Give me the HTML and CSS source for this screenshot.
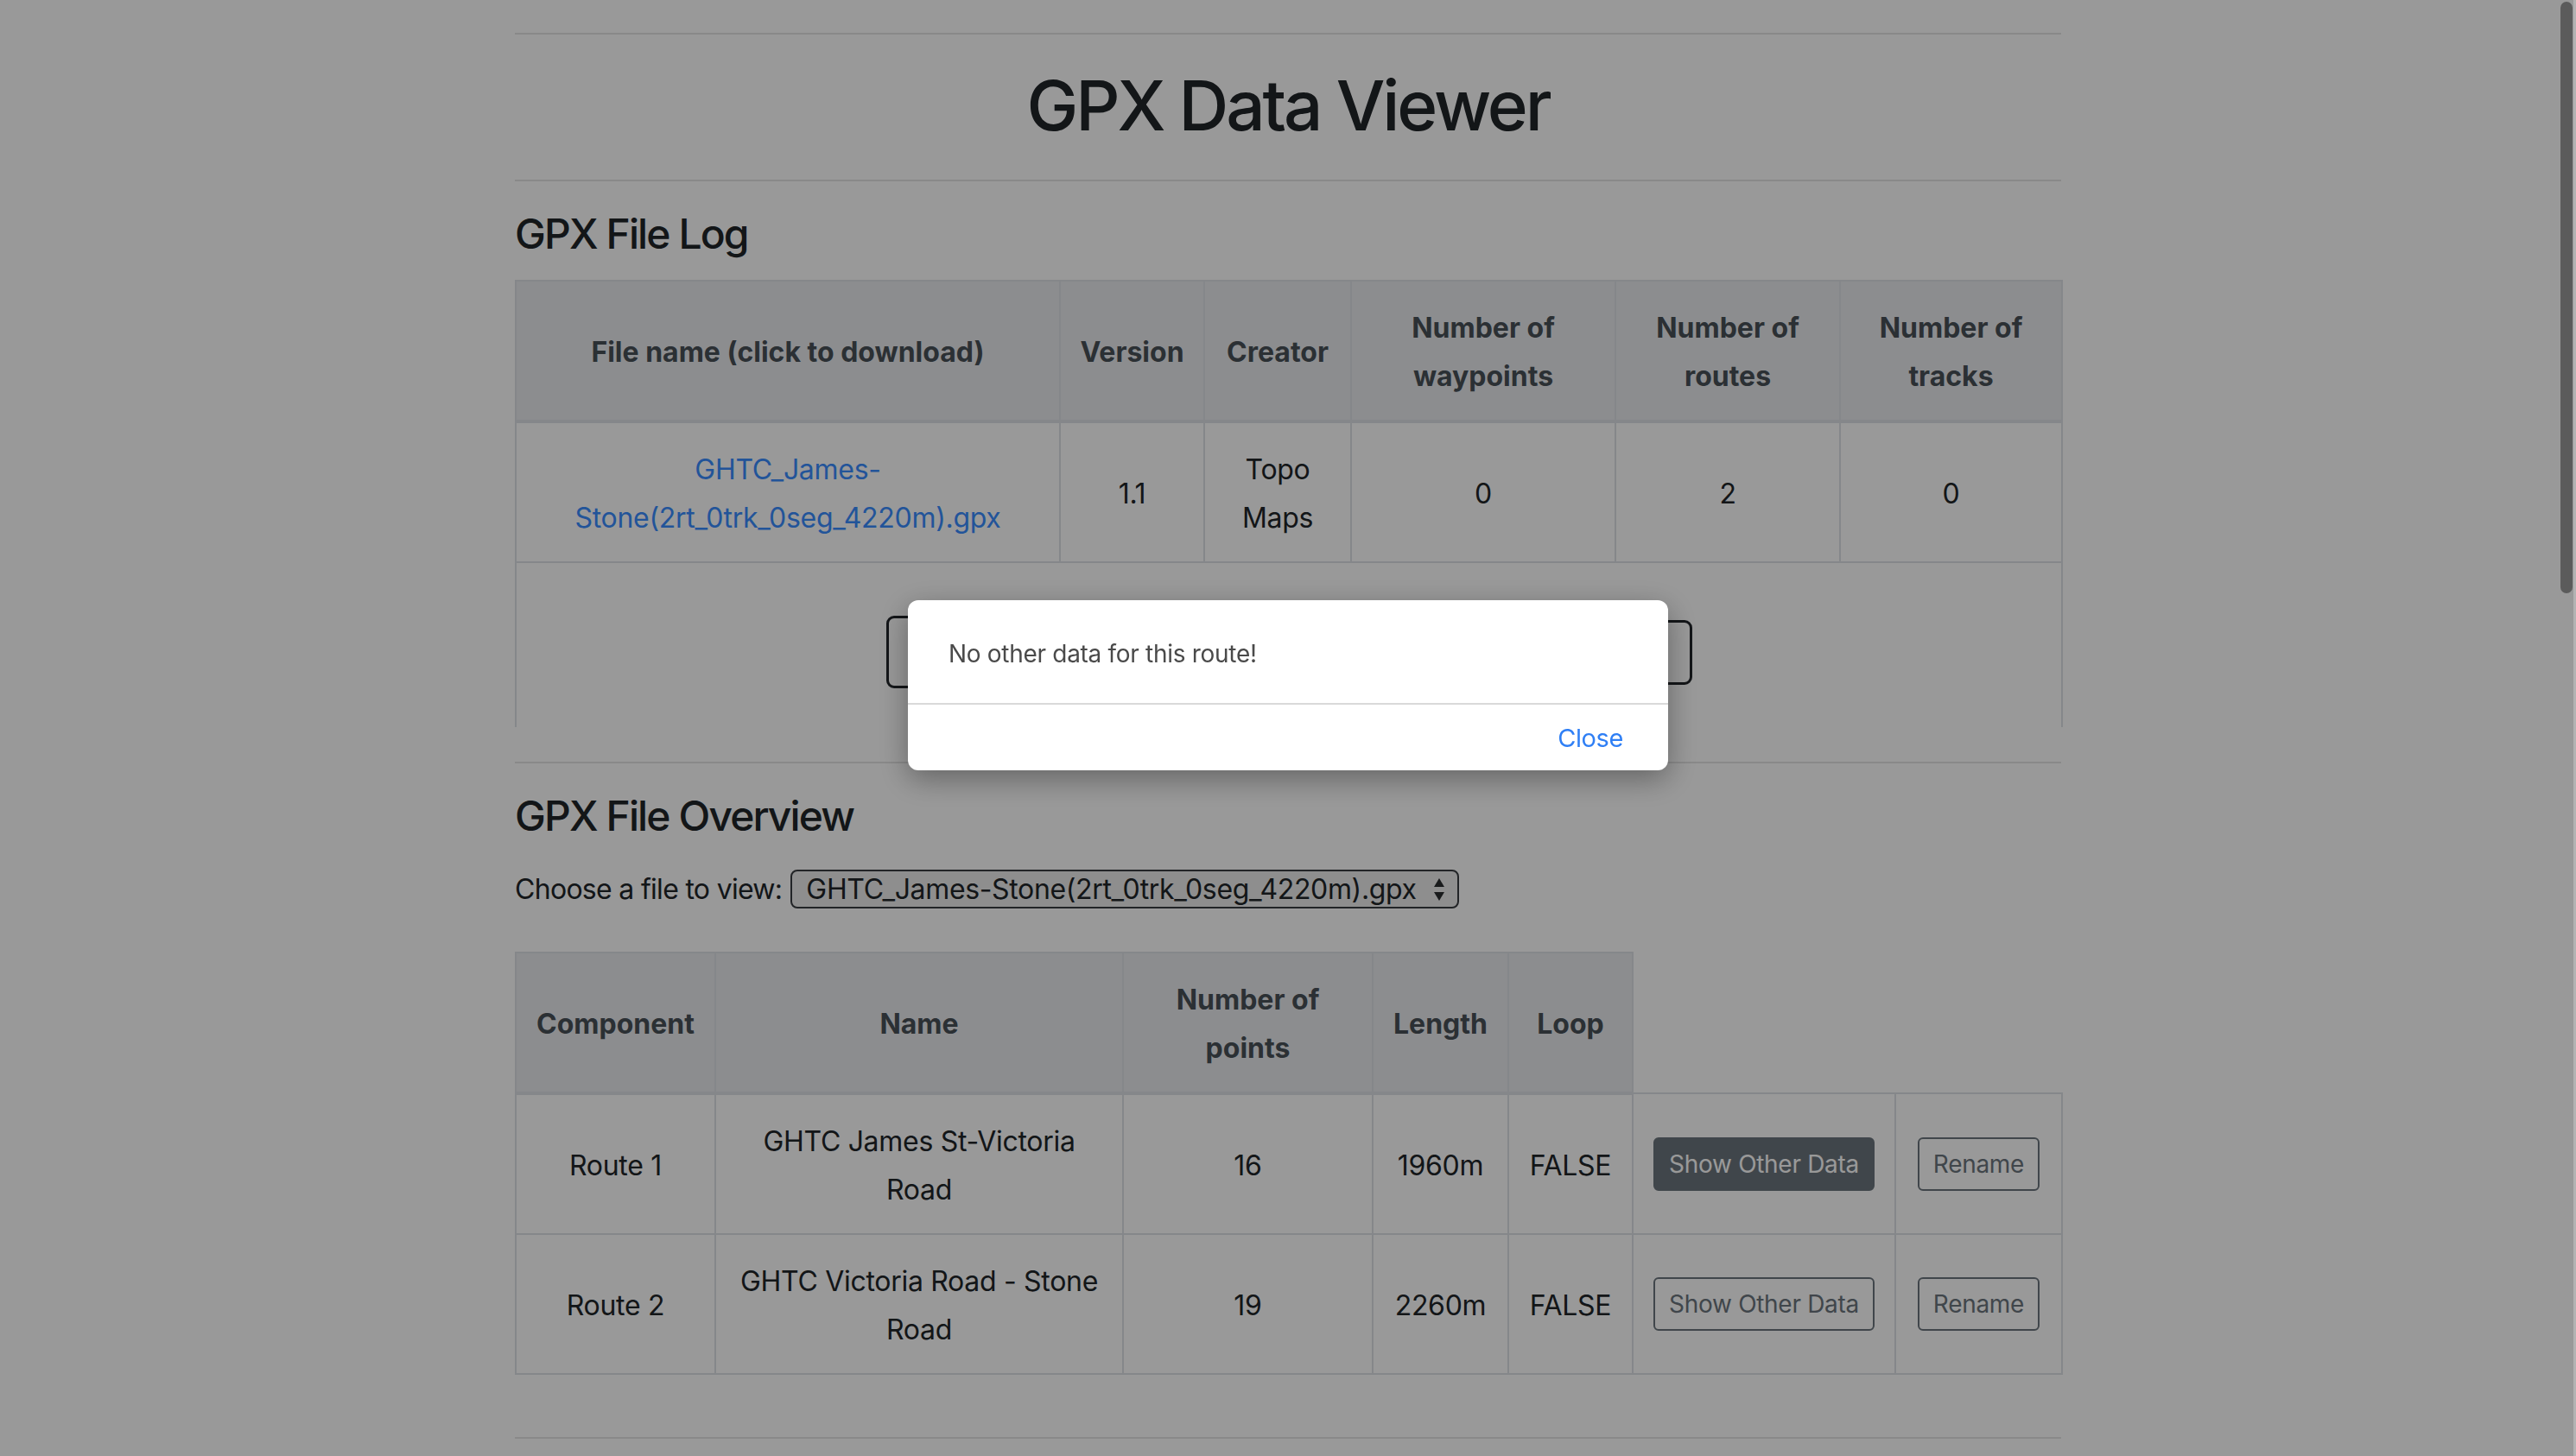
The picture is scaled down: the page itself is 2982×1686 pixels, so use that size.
FILE: index.html
```html
<!DOCTYPE html>
<html lang="en">
<head>
<meta charset="utf-8">
<title>GPX Data Viewer</title>
<link rel="stylesheet" href="styles.css">
</head>
<body>
<div class="page">
  <hr class="rule rule-top">
  <h1 class="title">GPX Data Viewer</h1>
  <hr class="rule rule-title">

  <section class="section">
    <h4 class="section-title">GPX File Log</h4>
    <table class="grid log-table">
      <colgroup>
        <col class="l1"><col class="l2"><col class="l3"><col class="l4"><col class="l5"><col class="l6">
      </colgroup>
      <thead>
        <tr>
          <th>File name (click to download)</th>
          <th>Version</th>
          <th>Creator</th>
          <th>Number of waypoints</th>
          <th>Number of routes</th>
          <th>Number of tracks</th>
        </tr>
      </thead>
      <tbody>
        <tr>
          <td><a class="file-link" href="#">GHTC_James-<br>Stone(2rt_0trk_0seg_4220m).gpx</a></td>
          <td>1.1</td>
          <td>Topo<br>Maps</td>
          <td>0</td>
          <td>2</td>
          <td>0</td>
        </tr>
        <tr>
          <td class="upload-cell" colspan="6">
            <div class="upload-row">
              <div class="upload-input"><span class="caret-bar"></span></div>
              <div class="upload-btn"></div>
            </div>
          </td>
        </tr>
      </tbody>
    </table>
  </section>

  <hr class="rule rule-section">

  <section class="section">
    <h4 class="section-title">GPX File Overview</h4>
    <div class="chooser">
      <span class="chooser-label">Choose a file to view:</span>
      <div class="fake-select">
        <span class="fake-select-text">GHTC_James-Stone(2rt_0trk_0seg_4220m).gpx</span>
        <svg class="fake-select-arrows" width="16" height="32" viewBox="0 0 16 32">
          <path d="M8 3 L14 13 L2 13 Z" fill="#2b2d30"/>
          <path d="M8 29 L14 19 L2 19 Z" fill="#2b2d30"/>
        </svg>
      </div>
    </div>

    <table class="grid view-table">
      <colgroup>
        <col class="v1"><col class="v2"><col class="v3"><col class="v4"><col class="v5"><col class="v6"><col class="v7">
      </colgroup>
      <thead>
        <tr>
          <th>Component</th>
          <th>Name</th>
          <th>Number of points</th>
          <th>Length</th>
          <th>Loop</th>
        </tr>
      </thead>
      <tbody>
        <tr>
          <td>Route 1</td>
          <td>GHTC James St-Victoria<br>Road</td>
          <td>16</td>
          <td>1960m</td>
          <td>FALSE</td>
          <td class="action"><button class="btn btn-active" type="button">Show Other Data</button></td>
          <td class="action"><button class="btn" type="button">Rename</button></td>
        </tr>
        <tr>
          <td>Route 2</td>
          <td>GHTC Victoria Road - Stone<br>Road</td>
          <td>19</td>
          <td>2260m</td>
          <td>FALSE</td>
          <td class="action"><button class="btn" type="button">Show Other Data</button></td>
          <td class="action"><button class="btn" type="button">Rename</button></td>
        </tr>
      </tbody>
    </table>
  </section>

  <hr class="rule rule-bottom">
</div>

<div class="backdrop"></div>

<div class="dialog">
  <div class="dialog-body">No other data for this route!</div>
  <div class="dialog-footer"><span class="dialog-close">Close</span></div>
</div>

<div class="scroll-edge"></div>
<div class="scroll-thumb"></div>
</body>
</html>
```

FILE: styles.css
```css
html, body {
  margin: 0;
  padding: 0;
  background: #ffffff;
  height: 1686px;
  overflow: hidden;
}

body {
  font-family: "Inter", "Noto Sans", "Liberation Sans", sans-serif;
  font-size: 32px;
  line-height: 56px;
  color: #212529;
}

.page {
  width: 1790px;
  margin: 0 auto;
}

.rule {
  border: 0;
  border-top: 2px solid rgba(0, 0, 0, 0.1);
  margin: 0;
  height: 0;
}

.rule-top { margin-top: 38px; }

.title {
  margin: 34px 0 38px;
  font-size: 80px;
  line-height: 96px;
  font-weight: 500;
  text-align: center;
  letter-spacing: -3.1px;
}

.section-title {
  margin: 32px 0 24px;
  font-size: 48px;
  line-height: 58px;
  font-weight: 500;
  letter-spacing: -1.9px;
}

.grid {
  width: 1790px;
  table-layout: fixed;
  border-collapse: collapse;
}

.grid th,
.grid td {
  padding: 26px 12px 22px;
  text-align: center;
  vertical-align: middle;
  border: 2px solid #dee2e6;
}

.grid td {
  letter-spacing: -0.3px;
}

.grid td.action {
  padding: 24px 12px;
}

.grid th {
  background: #e9ecef;
  color: #495057;
  font-weight: 700;
  border-bottom-width: 4px;
}

.l1 { width: 630px; }
.l2 { width: 167px; }
.l3 { width: 170px; }
.l4 { width: 306px; }
.l5 { width: 260px; }
.l6 { width: 257px; }

.v1 { width: 231px; }
.v2 { width: 472px; }
.v3 { width: 289px; }
.v4 { width: 157px; }
.v5 { width: 144px; }
.v6 { width: 304px; }
.v7 { width: 193px; }

.file-link {
  color: #3a8dff;
  text-decoration: none;
}

.grid td.upload-cell {
  padding: 61px 0 45px;
  border-bottom: 0;
}

.upload-row {
  display: flex;
  justify-content: center;
  align-items: center;
  gap: 24px;
}

.upload-input {
  width: 470px;
  height: 84px;
  box-sizing: border-box;
  border: 3px solid #212529;
  border-radius: 9px;
  display: flex;
  align-items: center;
  padding-left: 23px;
}

.caret-bar {
  width: 3px;
  height: 56px;
  background: #212529;
}

.upload-btn {
  width: 439px;
  height: 75px;
  box-sizing: border-box;
  border: 3px solid #212529;
  border-radius: 9px;
}

.chooser {
  display: flex;
  align-items: center;
  gap: 10px;
  margin-top: 33px;
  margin-bottom: 50px;
}

.chooser-label {
  font-size: 32px;
  line-height: 45px;
  letter-spacing: -0.7px;
}

.fake-select {
  display: flex;
  align-items: center;
  gap: 18px;
  height: 45px;
  box-sizing: border-box;
  border: 2px solid #3a3d41;
  border-radius: 8px;
  background: #ededed;
  padding: 0 13px 0 16px;
}

.fake-select-text {
  font-size: 32px;
  line-height: 40px;
  color: #212529;
  letter-spacing: -0.35px;
}

.fake-select-arrows {
  display: block;
}

.btn {
  font-family: inherit;
  font-size: 28px;
  line-height: 42px;
  padding: 8px 16px;
  border: 2px solid #6c757d;
  border-radius: 6px;
  background: transparent;
  color: #6c757d;
  letter-spacing: -0.3px;
}

.btn-active {
  background: #6c757d;
  color: #ffffff;
}

.rule-section { margin-top: 40px; }
.rule-bottom { margin-top: 72px; }

.backdrop {
  position: fixed;
  inset: 0;
  background: rgba(0, 0, 0, 0.4);
}

.dialog {
  position: fixed;
  left: 1051px;
  top: 695px;
  width: 880px;
  background: #ffffff;
  border-radius: 12px;
  box-shadow: 0 10px 34px rgba(0, 0, 0, 0.35);
  overflow: hidden;
}

.dialog-body {
  padding: 42px 47px 37px;
  font-size: 28px;
  line-height: 40px;
  color: #4a4a4a;
  letter-spacing: -0.3px;
  border-bottom: 2px solid #d9d9d9;
}

.dialog-footer {
  display: flex;
  justify-content: flex-end;
  padding: 19px 52px 17px;
  font-size: 29px;
  line-height: 40px;
  letter-spacing: -0.4px;
}

.dialog-close {
  color: #2f7ff5;
}

.scroll-edge {
  position: fixed;
  top: 0;
  right: 0;
  width: 3px;
  height: 1686px;
  background: #b3b3b3;
}

.scroll-thumb {
  position: fixed;
  top: 2px;
  right: 4px;
  width: 14px;
  height: 685px;
  border-radius: 7px;
  background: #5b5b5b;
}
```
